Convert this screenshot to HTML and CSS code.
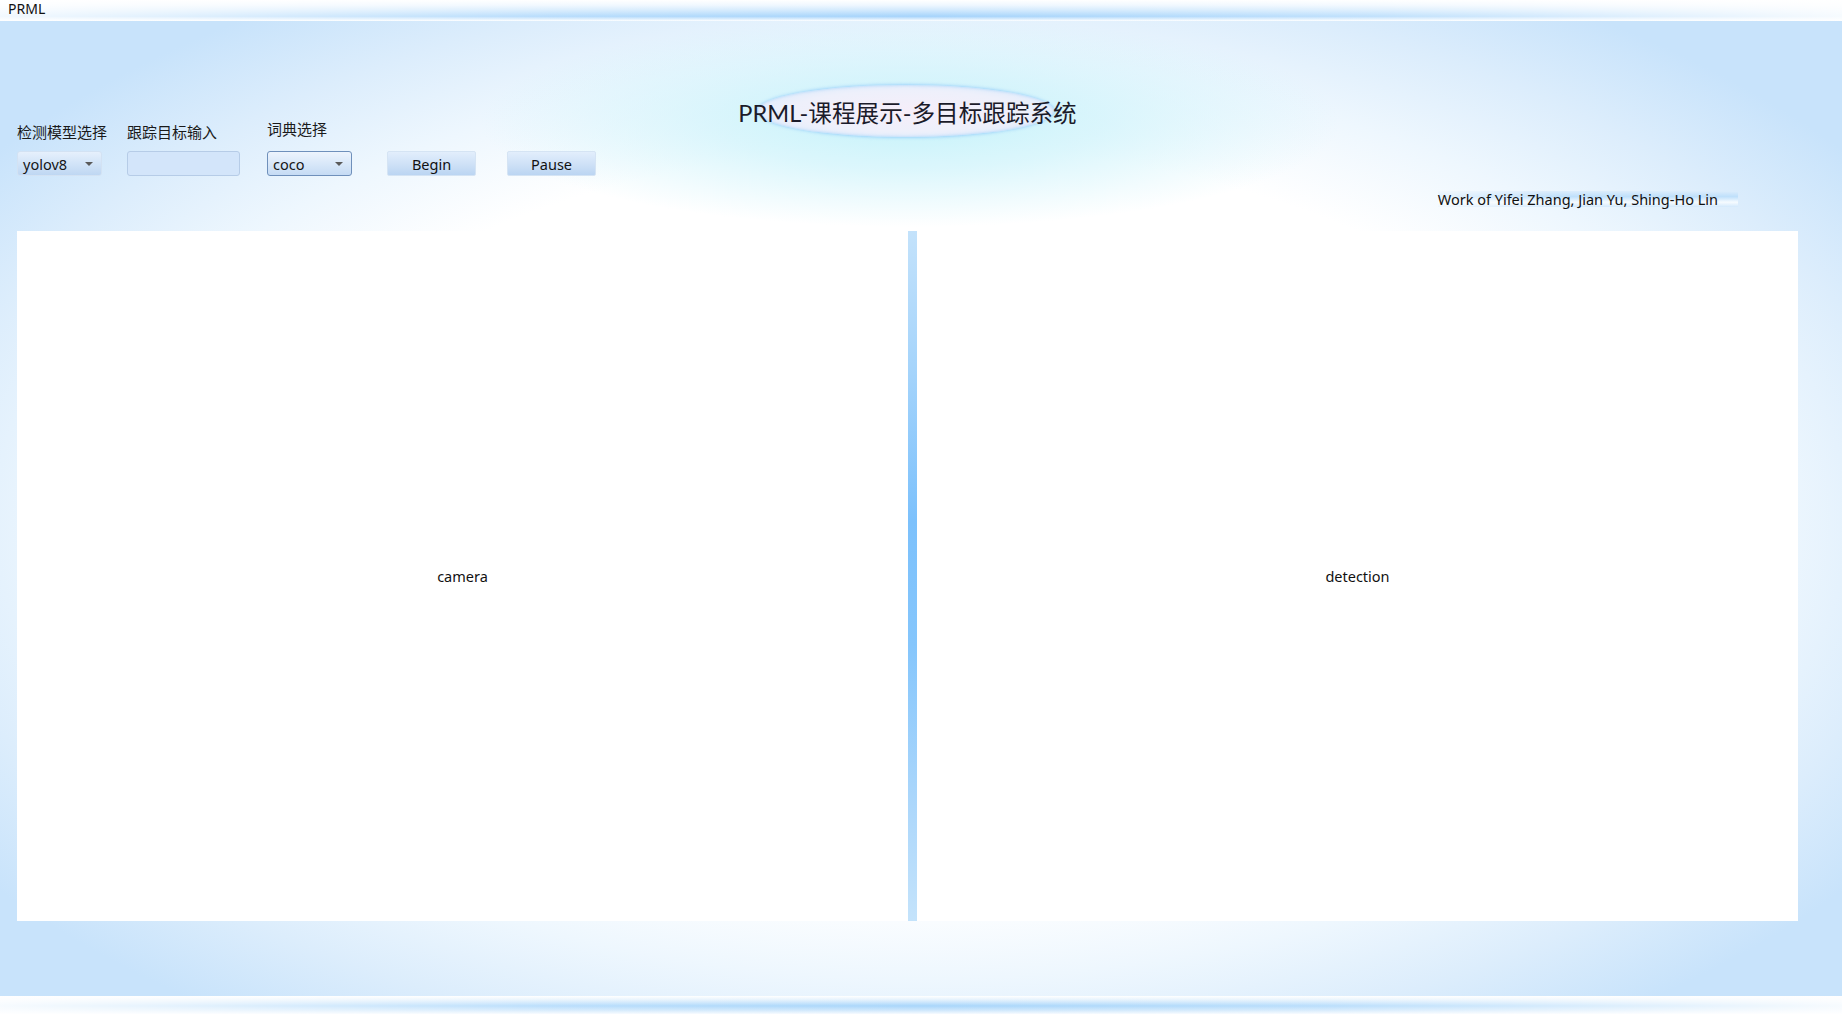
FILE: index.html
```html
<!DOCTYPE html>
<html lang="zh">
<head>
<meta charset="utf-8">
<title>PRML</title>
<link rel="stylesheet" href="styles.css">
</head>
<body>
<div class="window">
  <div class="titlebar"><span class="app-name">PRML</span></div>
  <div class="content">
    <header class="header">
      <div class="controls">
        <div class="field field-model">
          <span class="field-label">检测模型选择</span>
          <div class="combo combo-plain"><span>yolov8</span><span class="arrow"></span></div>
        </div>
        <div class="field field-target">
          <span class="field-label">跟踪目标输入</span>
          <div class="text-input"></div>
        </div>
        <div class="field field-dict">
          <span class="field-label">词典选择</span>
          <div class="combo combo-focus"><span>coco</span><span class="arrow"></span></div>
        </div>
        <button class="btn btn-begin">Begin</button>
        <button class="btn btn-pause">Pause</button>
      </div>
      <div class="title"><h1 class="title-text">PRML-课程展示-多目标跟踪系统</h1></div>
      <div class="header-spacer"></div>
    </header>
    <div class="credit-row"><span class="credit">Work of Yifei Zhang, Jian Yu, Shing-Ho Lin</span></div>
    <div class="panels">
      <div class="panel panel-camera">camera</div>
      <div class="divider"></div>
      <div class="panel panel-detection">detection</div>
    </div>
  </div>
  <div class="bottombar"></div>
</div>
</body>
</html>
```
FILE: styles.css
```css
* { box-sizing: border-box; }
html, body { margin: 0; padding: 0; }
body {
  font-family: "Noto Sans", "Noto Sans CJK SC", sans-serif;
  color: #151515;
  overflow: hidden;
}
.window {
  width: 1842px;
  height: 1014px;
  display: flex;
  flex-direction: column;
  background:
    radial-gradient(ellipse 430px 105px at 910px 122px, rgba(196, 242, 250, 0.95) 0%, rgba(205, 243, 251, 0.7) 45%, rgba(210, 240, 252, 0) 100%),
    radial-gradient(ellipse 1150px 620px at 921px 520px, #ffffff 0%, #ffffff 60%, #eef7fe 74%, #dcedfc 87%, #c8e3fb 100%);
  background-color: #c8e3fb;
}
.titlebar {
  height: 21px;
  flex: none;
  display: flex;
  align-items: flex-start;
  padding-left: 8px;
  background:
    linear-gradient(to right, rgba(255,255,255,0.85) 0%, rgba(255,255,255,0.2) 30%, rgba(255,255,255,0) 50%, rgba(255,255,255,0.3) 75%, rgba(255,255,255,0.9) 100%),
    linear-gradient(to bottom, #ffffff 0%, #eef7ff 25%, #cfe8fd 50%, #a6d4fb 78%, #ffffff 100%);
}
.app-name {
  font-size: 14px;
  line-height: 16px;
  color: #111;
  margin-top: 1px;
}
.content {
  flex: 1;
  display: flex;
  flex-direction: column;
  padding: 0 44px 0 17px;
}
.header {
  display: grid;
  grid-template-columns: 1fr auto 1fr;
  padding-top: 64px;
}
.controls {
  display: flex;
  align-items: flex-end;
  margin-top: 35px;
}
.field {
  display: flex;
  flex-direction: column;
  align-items: flex-start;
}
.field-label {
  font-size: 15px;
  line-height: 18px;
  margin-bottom: 10px;
  color: #1a1a1a;
}
.field-dict .field-label { margin-bottom: 13px; }
.field-target { margin-left: 20px; }
.field-dict { margin-left: 27px; }
.combo {
  width: 85px;
  height: 25px;
  display: flex;
  align-items: center;
  justify-content: space-between;
  padding: 0 8px 0 5px;
  font-size: 14.5px;
  border-radius: 3px;
}
.combo-plain {
  background: linear-gradient(to bottom, #e6f0fc 0%, #d2e4f8 50%, #bfd7f2 100%);
  border: 1px solid #d3e2f3;
}
.combo-focus {
  background: linear-gradient(to bottom, #edf4fd 0%, #d9e8f9 50%, #c5dbf4 100%);
  border: 1px solid #6f90bb;
}
.arrow {
  width: 0;
  height: 0;
  border-left: 4px solid transparent;
  border-right: 4px solid transparent;
  border-top: 4px solid #5a5a5a;
}
.text-input {
  width: 113px;
  height: 25px;
  background: #d3e5fa;
  border: 1px solid #b6cce7;
  border-radius: 3px;
}
.btn {
  width: 89px;
  height: 25px;
  font-family: "Noto Sans", sans-serif;
  font-size: 14.5px;
  color: #111;
  padding: 0;
  border: 1px solid #d5e4f4;
  border-radius: 2px;
  background: linear-gradient(to bottom, #e2eefc 0%, #d0e2f7 50%, #bbd5f2 100%);
}
.btn-begin { margin-left: 35px; }
.btn-pause { margin-left: 31px; }
.title {
  grid-column: 2;
  align-self: start;
}
.title-text {
  position: relative;
  margin: 0;
  height: 52px;
  line-height: 56px;
  font-family: "Lato", "Noto Sans CJK SC", sans-serif;
  font-weight: normal;
  font-size: 23.6px;
  color: #1b1b2a;
  white-space: nowrap;
  z-index: 0;
}
.title-text::before {
  content: "";
  position: absolute;
  left: 19px;
  right: 23px;
  top: 0;
  bottom: 0;
  border-radius: 50%;
  background: radial-gradient(ellipse at center, #f6eef9 0%, #eef0fb 55%, #dcebfc 85%, #c6e3fb 100%);
  box-shadow: 0 0 3px 1px rgba(150, 205, 250, 0.8), inset 0 0 3px rgba(150, 205, 250, 0.8);
  z-index: -1;
}
.credit-row {
  display: flex;
  justify-content: flex-end;
  padding-right: 60px;
  margin-top: 15px;
  margin-bottom: 24px;
}
.credit {
  font-size: 14.5px;
  line-height: 16px;
  height: 16px;
  padding-right: 20px;
  color: #111;
  background:
    linear-gradient(to right, rgba(255,255,255,0.6) 0%, rgba(255,255,255,0) 40%),
    linear-gradient(to bottom, #dcedfc 0%, #bfe0fb 35%, #f6fbff 70%, #d3e9fc 100%);
}
.panels {
  display: flex;
  height: 690px;
  flex: none;
}
.panel {
  background: #ffffff;
  display: flex;
  align-items: center;
  justify-content: center;
  font-size: 14.5px;
  color: #111;
}
.panel-camera { width: 891px; }
.panel-detection { flex: 1; }
.divider {
  width: 9px;
  flex: none;
  background: linear-gradient(to bottom, #c3e2fb 0%, #a5d4fb 20%, #7cc1fc 42%, #85c6fc 60%, #aad6fb 82%, #c4e3fb 100%);
}
.bottombar {
  height: 18px;
  flex: none;
  background:
    linear-gradient(to right, rgba(255,255,255,0.9) 0%, rgba(255,255,255,0.2) 30%, rgba(255,255,255,0) 50%, rgba(255,255,255,0.2) 72%, rgba(255,255,255,0.9) 100%),
    linear-gradient(to bottom, #ffffff 0%, #e3f1fd 22%, #a9d6fb 55%, #d0e8fc 80%, #f7fbff 100%);
}
```
